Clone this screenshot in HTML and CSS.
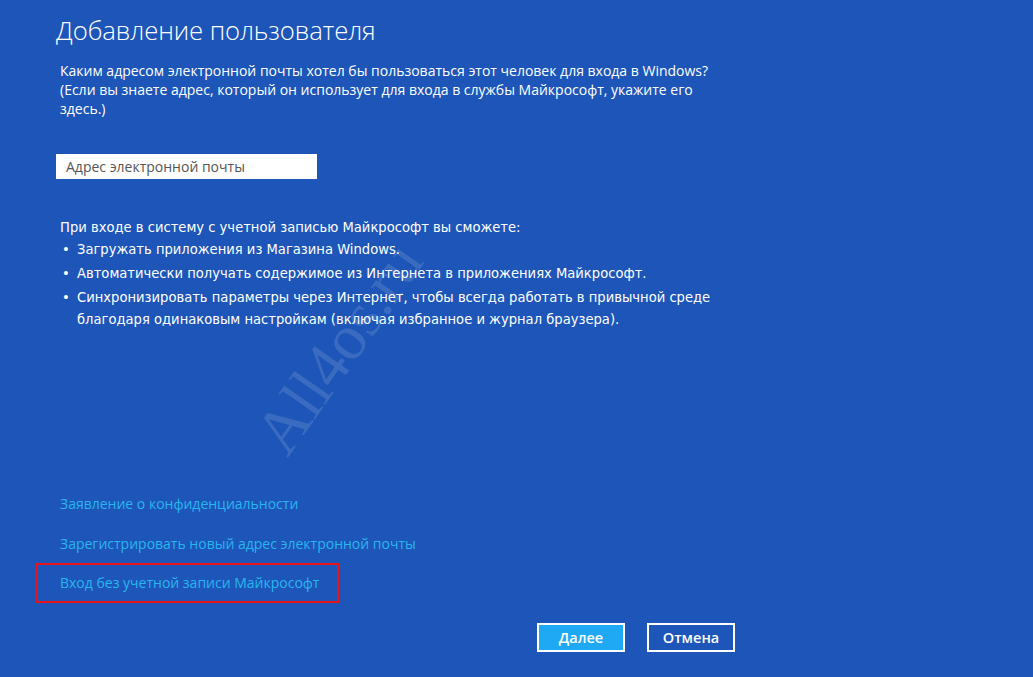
FILE: index.html
```html
<!DOCTYPE html>
<html lang="ru">
<head>
    <meta charset="UTF-8">
    <title>Добавление пользователя</title>
    <link rel="stylesheet" href="styles.css">
</head>
<body>
    <div class="page">
        <h1>Добавление пользователя</h1>
        <p class="intro">Каким адресом электронной почты хотел бы пользоваться этот человек для входа в Windows?<br>(Если вы знаете адрес, который он использует для входа в службы Майкрософт, укажите его<br>здесь.)</p>

        <input type="text" class="email" placeholder="Адрес электронной почты">

        <div class="benefits">
            <p>При входе в систему с учетной записью Майкрософт вы сможете:</p>
            <ul>
                <li>Загружать приложения из Магазина Windows.</li>
                <li>Автоматически получать содержимое из Интернета в приложениях Майкрософт.</li>
                <li>Синхронизировать параметры через Интернет, чтобы всегда работать в привычной среде<br>благодаря одинаковым настройкам (включая избранное и журнал браузера).</li>
            </ul>
        </div>

        <div class="links">
            <a href="#">Заявление о конфиденциальности</a>
            <a href="#">Зарегистрировать новый адрес электронной почты</a>
            <a href="#" class="marked">Вход без учетной записи Майкрософт</a>
        </div>

        <div class="buttons">
            <button class="primary">Далее</button>
            <button>Отмена</button>
        </div>
    </div>

    <div class="watermark">All4os.ru</div>
</body>
</html>
```

FILE: styles.css
```css
body {
    margin: 0;
    background: #1d56b8;
    color: #fff;
    font-family: "Open Sans", "Noto Sans", sans-serif;
    width: 1033px;
    height: 677px;
    overflow: hidden;
    position: relative;
}
.page {
    padding: 12px 0 0 56px;
}
h1 {
    margin: 0;
    font-weight: 300;
    font-size: 25.7px;
    line-height: 38px;
    letter-spacing: -0.1px;
}
.intro {
    margin: 11px 0 0 4px;
    font-size: 14px;
    line-height: 19px;
    white-space: nowrap;
}
.email {
    display: block;
    margin-top: 36px;
    width: 261px;
    height: 25px;
    box-sizing: border-box;
    border: none;
    padding: 0 10px;
    font-family: "Open Sans", sans-serif;
    font-size: 14px;
    outline: none;
}
.email::placeholder {
    color: #555;
}
.benefits {
    margin: 37px 0 0 4px;
    font-family: "Liberation Sans Narrow", "DejaVu Sans Condensed", sans-serif;
    font-size: 14.6px;
    line-height: 22px;
}
.benefits p {
    margin: 0;
}
.benefits ul {
    margin: 0;
    padding: 0 0 0 17px;
    list-style: none;
}
.benefits li {
    position: relative;
    margin-bottom: 2px;
}
.benefits li::before {
    content: "•";
    position: absolute;
    left: -15px;
}
.links {
    display: flex;
    flex-direction: column;
    align-items: flex-start;
    margin: 154px 0 0 -20px;
}
.links a {
    color: #2ab5f0;
    text-decoration: none;
    font-size: 14px;
    line-height: 36px;
    padding: 0 18px 0 22px;
    border: 2px solid transparent;
}
.links a.marked {
    border-color: #e8141c;
    margin-top: -1px;
}
.buttons {
    display: flex;
    gap: 22px;
    margin: 20px 0 0 481px;
}
.buttons button {
    width: 88px;
    height: 29px;
    background: transparent;
    border: 2px solid #fff;
    color: #fff;
    font-family: "Open Sans", sans-serif;
    font-weight: 600;
    font-size: 14.5px;
    padding: 0;
}
.buttons .primary {
    background: #1fa9f4;
}
.watermark {
    position: absolute;
    left: 240px;
    top: 425px;
    font-family: "Liberation Serif", serif;
    font-size: 64px;
    color: rgba(255, 255, 255, 0.13);
    transform: rotate(-55deg);
    transform-origin: left top;
    pointer-events: none;
}
```
